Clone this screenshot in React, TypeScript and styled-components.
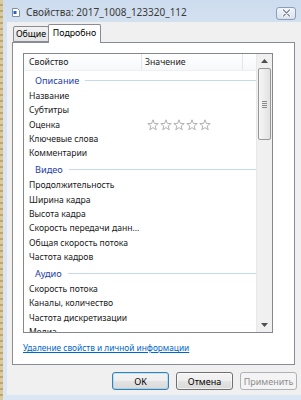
import React from "react";
import styled, { createGlobalStyle } from "styled-components";

const GlobalStyle = createGlobalStyle`
	html, body {
		margin: 0;
		padding: 0;
	}
	body {
		width: 301px;
		height: 400px;
		overflow: hidden;
		background: #d6e3f1;
		font-family: "Segoe UI", "Noto Sans", "Open Sans", sans-serif;
	}
`;

const Screen = styled.div`
	display: flex;
	width: 301px;
	height: 400px;
`;

const DesktopEdge = styled.div`
	width: 3px;
	flex: none;
	background: repeating-linear-gradient(to bottom, #d9c99c 0 4px, #bfa76c 4px 6px);
`;

const Frame = styled.div`
	flex: 1;
	display: flex;
	flex-direction: column;
	background: linear-gradient(to bottom, #cddcee 0, #d8e4f2 40px, #dae6f3 100%);
	padding-bottom: 5px;
	min-width: 0;
`;

const TitleBar = styled.div`
	height: 22px;
	display: flex;
	align-items: center;
	padding: 2px 5px 0 9px;
	box-sizing: border-box;
	font-size: 10px;
	color: #3a3a3a;
`;

const TitleText = styled.span`
	margin-left: 6px;
	flex: 1;
	white-space: nowrap;
`;

const CloseButton = styled.div`
	width: 20px;
	height: 13px;
	box-sizing: border-box;
	border: 1px solid #8e9db5;
	border-radius: 3px;
	background: linear-gradient(to bottom, #f1f5fa, #d7e1ee);
	display: flex;
	align-items: center;
	justify-content: center;
	margin-top: 2px;
`;

const Client = styled.div`
	flex: 1;
	margin-left: 4px;
	background: #f0f0f0;
	display: flex;
	flex-direction: column;
`;

const TabStrip = styled.div`
	height: 20px;
	display: flex;
	align-items: flex-end;
	padding-left: 6px;
	position: relative;
	z-index: 1;
`;

const Tab = styled.div<{ $active?: boolean }>`
	box-sizing: border-box;
	width: ${(p) => (p.$active ? "53px" : "36px")};
	height: ${(p) => (p.$active ? "19px" : "16px")};
	margin-bottom: ${(p) => (p.$active ? "-1px" : "0")};
	margin-left: ${(p) => (p.$active ? "-1px" : "0")};
	padding-top: ${(p) => (p.$active ? "3px" : "2px")};
	border: 1px solid #898c95;
	border-bottom: ${(p) => (p.$active ? "none" : "1px solid #898c95")};
	border-radius: 2px 2px 0 0;
	background: ${(p) => (p.$active ? "#fff" : "linear-gradient(to bottom, #f3f3f3, #e3e3e3)")};
	font-size: 8.8px;
	line-height: 11px;
	text-align: center;
	color: #000;
	white-space: nowrap;
`;

const Panel = styled.div`
	margin: 0 6px 0 5px;
	height: 323px;
	box-sizing: border-box;
	border: 1px solid #898c95;
	background: #fff;
	padding: 10px;
	display: flex;
	flex-direction: column;
`;

const ListBox = styled.div`
	width: 250px;
	height: 280px;
	box-sizing: border-box;
	border: 1px solid #828790;
	display: flex;
	overflow: hidden;
`;

const ListMain = styled.div`
	flex: 1;
	display: flex;
	flex-direction: column;
	overflow: hidden;
	min-width: 0;
`;

const HeaderRow = styled.div`
	height: 16px;
	flex: none;
	display: flex;
	background: linear-gradient(to bottom, #ffffff, #f7f8fa);
	border-bottom: 1px solid #eef0f3;
	font-size: 8.7px;
	color: #1b1b1b;
`;

const HeaderCell = styled.div<{ $w: number; $pad: number }>`
	width: ${(p) => p.$w}px;
	flex: none;
	box-sizing: border-box;
	padding-left: ${(p) => p.$pad}px;
	border-right: 1px solid #e3e5e8;
	line-height: 16px;
	white-space: nowrap;
	overflow: hidden;
`;

const Rows = styled.div`
	flex: 1;
	overflow: hidden;
`;

const GroupRow = styled.div`
	height: 17.7px;
	display: flex;
	align-items: center;
	padding: 1px 0 0 11px;
	box-sizing: border-box;
	font-size: 9.2px;
	color: #1e3ea8;
`;

const GroupLine = styled.div`
	flex: 1;
	height: 1px;
	margin-left: 6px;
	background: #c7d7ee;
`;

const ItemRow = styled.div`
	height: 14.35px;
	display: flex;
	align-items: center;
	font-size: 8.6px;
	color: #1a1a1a;
`;

const NameCell = styled.div`
	width: 118px;
	flex: none;
	padding-left: 5px;
	box-sizing: border-box;
	white-space: nowrap;
	overflow: hidden;
`;

const ValueCell = styled.div`
	padding-left: 5px;
	display: flex;
	align-items: center;
`;

const ScrollBar = styled.div`
	width: 15px;
	flex: none;
	background: #f0f0f0;
	border-left: 1px solid #e8e8e8;
	display: flex;
	flex-direction: column;
	align-items: center;
`;

const Arrow = styled.div`
	height: 14px;
	width: 100%;
	flex: none;
	display: flex;
	align-items: center;
	justify-content: center;
`;

const Thumb = styled.div`
	width: 13px;
	height: 72px;
	box-sizing: border-box;
	border: 1px solid #979797;
	border-radius: 2px;
	background: linear-gradient(to right, #f6f6f6, #e2e2e2);
	display: flex;
	flex-direction: column;
	align-items: center;
	justify-content: center;
	gap: 1px;
`;

const Grip = styled.div`
	width: 5px;
	height: 1px;
	background: #8a8a8a;
`;

const Track = styled.div`
	flex: 1;
`;

const RemoveLink = styled.a`
	margin-top: 9px;
	font-size: 8.3px;
	color: #0066cc;
	text-decoration: underline;
	white-space: nowrap;
`;

const ButtonRow = styled.div`
	display: flex;
	justify-content: flex-end;
	gap: 7px;
	margin-top: 7px;
	padding-right: 4px;
`;

const DialogButton = styled.button<{ $default?: boolean }>`
	width: 57px;
	height: 18px;
	box-sizing: border-box;
	padding: 0;
	border: 1px solid ${(p) => (p.$default ? "#3c7fb1" : "#707070")};
	border-radius: 3px;
	background: linear-gradient(to bottom, #f4f4f4 0, #eeeeee 50%, #e3e3e3 51%, #d9d9d9 100%);
	font-family: inherit;
	font-size: 9px;
	color: #000;
	box-shadow: inset 0 0 0 1px ${(p) => (p.$default ? "rgba(72, 200, 255, 0.35)" : "rgba(255,255,255,0.6)")};
	&:disabled {
		border-color: #adb2b5;
		background: #f4f4f4;
		color: #8d8d8d;
		box-shadow: none;
	}
`;

const Stars = () => (
	<svg width="64" height="12" viewBox="0 0 64 12">
		{[0, 1, 2, 3, 4].map((i) => (
			<path
				key={i}
				transform={`translate(${i * 13} 0)`}
				d="M6 0.8 L7.35 4.44 L11.23 4.6 L8.19 7.01 L9.23 10.75 L6 8.6 L2.77 10.75 L3.81 7.01 L0.77 4.6 L4.65 4.44 Z"
				fill="#fff"
				stroke="#a9a9a9"
				strokeWidth="0.9"
				strokeLinejoin="round"
			/>
		))}
	</svg>
);

type Row = { kind: "group"; label: string } | { kind: "item"; label: string; stars?: boolean };

const rows: Row[] = [
	{ kind: "group", label: "Описание" },
	{ kind: "item", label: "Название" },
	{ kind: "item", label: "Субтитры" },
	{ kind: "item", label: "Оценка", stars: true },
	{ kind: "item", label: "Ключевые слова" },
	{ kind: "item", label: "Комментарии" },
	{ kind: "group", label: "Видео" },
	{ kind: "item", label: "Продолжительность" },
	{ kind: "item", label: "Ширина кадра" },
	{ kind: "item", label: "Высота кадра" },
	{ kind: "item", label: "Скорость передачи данн..." },
	{ kind: "item", label: "Общая скорость потока" },
	{ kind: "item", label: "Частота кадров" },
	{ kind: "group", label: "Аудио" },
	{ kind: "item", label: "Скорость потока" },
	{ kind: "item", label: "Каналы, количество" },
	{ kind: "item", label: "Частота дискретизации" },
	{ kind: "item", label: "Медиа" },
];

const App = () => {
	return (
		<>
			<GlobalStyle />
			<Screen>
				<DesktopEdge />
				<Frame>
					<TitleBar>
						<svg width="8" height="9" viewBox="0 0 8 9">
							<path d="M0.5 0.5 H5.5 L7.5 2.5 V8.5 H0.5 Z" fill="#fff" stroke="#7d8ea8" />
							<rect x="1.5" y="3" width="3" height="3" fill="#2a62c9" />
						</svg>
						<TitleText>Свойства: 2017_1008_123320_112</TitleText>
						<CloseButton>
							<svg width="9" height="8" viewBox="0 0 9 8">
								<path d="M1.5 1 L7.5 7 M7.5 1 L1.5 7" stroke="#fff" strokeWidth="3" strokeLinecap="round" />
								<path d="M1.5 1 L7.5 7 M7.5 1 L1.5 7" stroke="#7b8494" strokeWidth="1.3" strokeLinecap="round" />
							</svg>
						</CloseButton>
					</TitleBar>
					<Client>
						<TabStrip>
							<Tab>Общие</Tab>
							<Tab $active>Подробно</Tab>
						</TabStrip>
						<Panel>
							<ListBox>
								<ListMain>
									<HeaderRow>
										<HeaderCell $w={118} $pad={5}>Свойство</HeaderCell>
										<HeaderCell $w={101} $pad={3}>Значение</HeaderCell>
									</HeaderRow>
									<Rows>
										{rows.map((r, i) =>
											r.kind === "group" ? (
												<GroupRow key={i}>
													{r.label}
													<GroupLine />
												</GroupRow>
											) : (
												<ItemRow key={i}>
													<NameCell>{r.label}</NameCell>
													<ValueCell>{r.stars && <Stars />}</ValueCell>
												</ItemRow>
											)
										)}
									</Rows>
								</ListMain>
								<ScrollBar>
									<Arrow>
										<svg width="7" height="4" viewBox="0 0 7 4">
											<path d="M0 4 L3.5 0 L7 4 Z" fill="#4e4e4e" />
										</svg>
									</Arrow>
									<Thumb>
										<Grip />
										<Grip />
										<Grip />
										<Grip />
									</Thumb>
									<Track />
									<Arrow>
										<svg width="7" height="4" viewBox="0 0 7 4">
											<path d="M0 0 L3.5 4 L7 0 Z" fill="#4e4e4e" />
										</svg>
									</Arrow>
								</ScrollBar>
							</ListBox>
							<RemoveLink>Удаление свойств и личной информации</RemoveLink>
						</Panel>
						<ButtonRow>
							<DialogButton $default>OK</DialogButton>
							<DialogButton>Отмена</DialogButton>
							<DialogButton disabled>Применить</DialogButton>
						</ButtonRow>
					</Client>
				</Frame>
			</Screen>
		</>
	);
};

export default App;
